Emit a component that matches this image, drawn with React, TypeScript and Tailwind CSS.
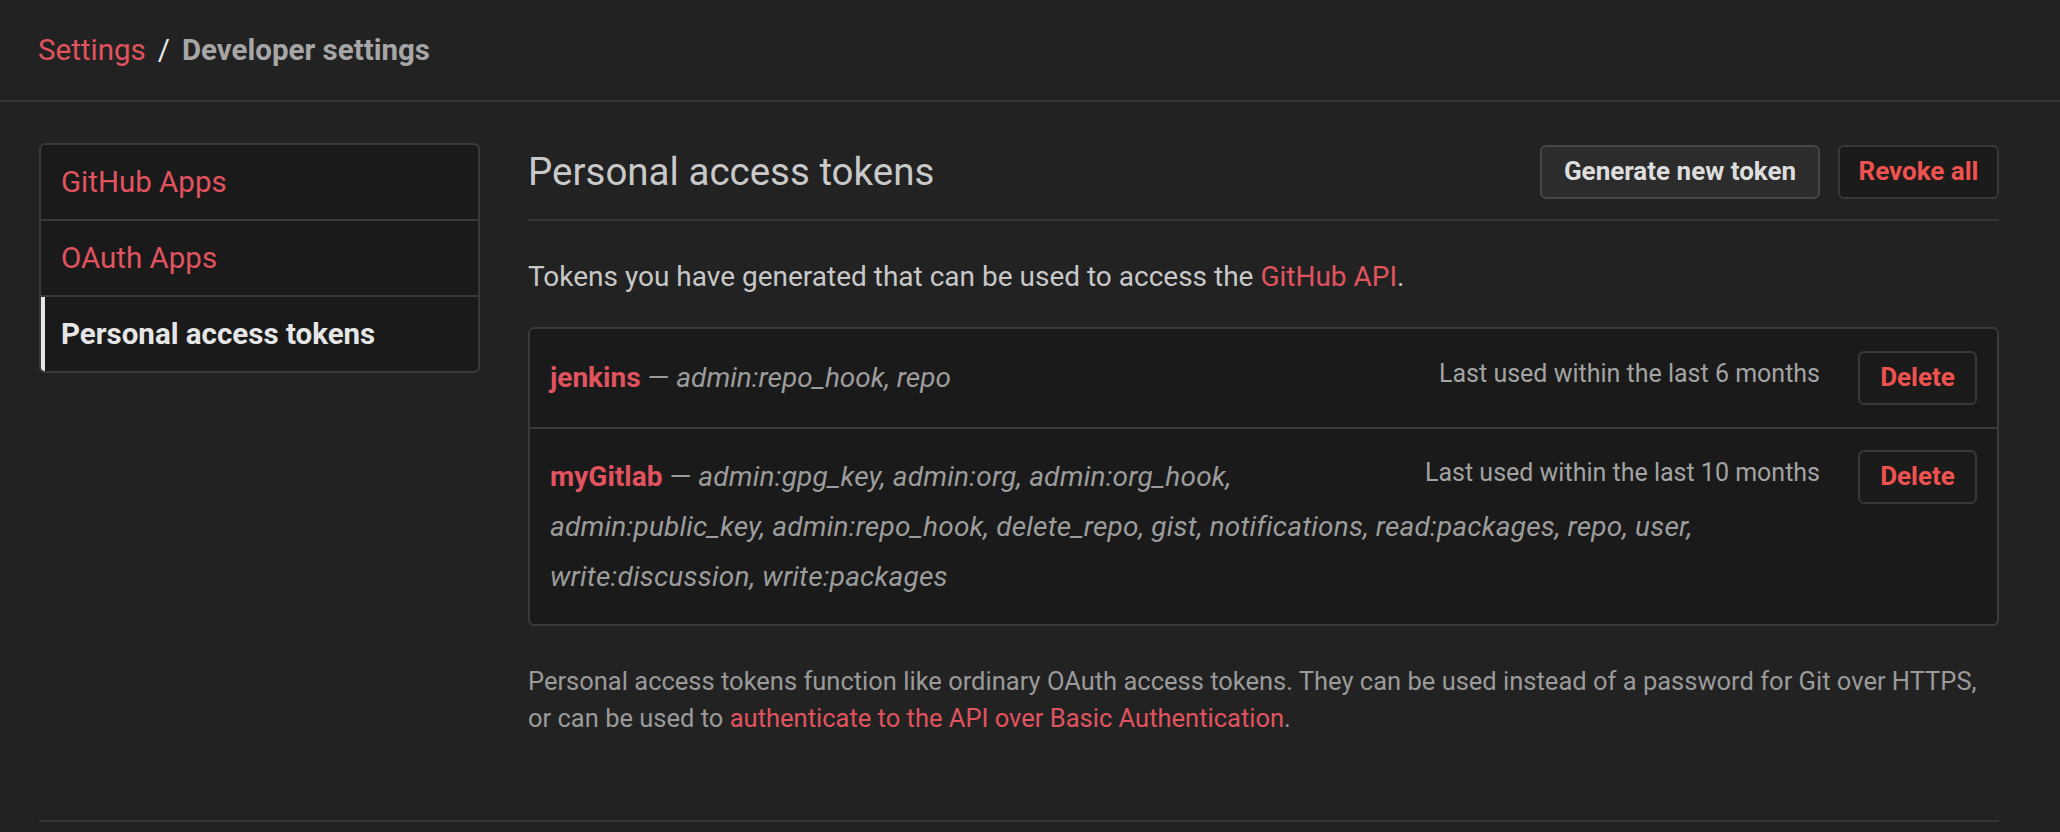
const font = { fontFamily: "Roboto, 'Noto Sans', 'Liberation Sans', sans-serif" };

function SideNav() {
  return (
    <nav className="w-[441px] shrink-0 overflow-hidden rounded-[6px] border-2 border-[#3a3a3a] bg-[#1a1a1a]">
      <a className="flex h-[74px] items-center pl-[20px] text-[29.5px] text-[#e0535f]">GitHub Apps</a>
      <a className="flex h-[76px] items-center border-t-2 border-[#3a3a3a] pl-[20px] text-[29.5px] text-[#e0535f]">
        OAuth Apps
      </a>
      <a className="relative flex h-[76px] items-center border-t-2 border-[#3a3a3a] pl-[20px] text-[29.5px] font-bold text-[#e6e6e6]">
        <span className="absolute top-0 bottom-0 left-0 w-[4px] bg-[#e6e6e6]" />
        Personal access tokens
      </a>
    </nav>
  );
}

function LastUsed({ when }: { when: string }) {
  return (
    <div className="float-right ml-[20px] flex h-[50px] items-start gap-[38px]">
      <span className="text-[25px] leading-[42px] text-[#a3a3a3]">Last used within the last {when}</span>
      <button className="-mt-[2px] h-[54px] w-[119px] rounded-[6px] border-2 border-[#383838] bg-[#1b1b1b] text-[26px] font-bold text-[#f0524f]">
        Delete
      </button>
    </div>
  );
}

function TokenList() {
  return (
    <div className="rounded-[6px] border-2 border-[#3a3a3a] bg-[#1a1a1a]">
      <div className="px-[20px] py-[24px]">
        <LastUsed when="6 months" />
        <p className="text-[28px] leading-[50px] text-[#9c9c9c]">
          <strong className="text-[#e0535f]">jenkins</strong> — <em>admin:repo_hook, repo</em>
        </p>
      </div>
      <div className="border-t-2 border-[#3a3a3a] px-[20px] pt-[23px] pb-[22px]">
        <LastUsed when="10 months" />
        <p className="text-[28px] leading-[50px] text-[#9c9c9c]">
          <strong className="text-[#e0535f]">myGitlab</strong> —{" "}
          <em className="tracking-[0.2px]">
            admin:gpg_key, admin:org, admin:org_hook,
            <br />
            admin:public_key, admin:repo_hook, delete_repo, gist, notifications, read:packages, repo, user,
            <br />
            write:discussion, write:packages
          </em>
        </p>
      </div>
    </div>
  );
}

export default function App() {
  return (
    <div className="min-h-screen bg-[#222222]" style={font}>
      <header className="h-[102px] border-b-2 border-[#343434]">
        <div className="ml-[38px] flex h-[100px] items-center text-[29.5px]">
          <a className="text-[#e0535f]">Settings</a>
          <span className="mx-[12px] text-[#e8e8e8]">/</span>
          <span className="font-bold text-[#a6a6a6]">Developer settings</span>
        </div>
      </header>

      <div className="ml-[39px] w-[1960px]">
        <div className="flex items-start gap-[48px] pt-[41px]">
          <SideNav />

          <main className="min-w-0 flex-1">
            <div className="flex items-center justify-between border-b-2 border-[#363636] pb-[18px]">
              <h2 className="text-[38.5px] text-[#c9c9c9]">Personal access tokens</h2>
              <div className="flex gap-[18px]">
                <button className="h-[54px] w-[280px] rounded-[6px] border-2 border-[#464646] bg-[#2c2c2c] text-[26px] font-bold text-[#dedede]">
                  Generate new token
                </button>
                <button className="h-[54px] w-[161px] rounded-[6px] border-2 border-[#383838] bg-[#1b1b1b] text-[26px] font-bold text-[#f0524f]">
                  Revoke all
                </button>
              </div>
            </div>

            <p className="mt-[35px] mb-[29px] text-[28px] leading-[42px] text-[#c8c8c8]">
              Tokens you have generated that can be used to access the{" "}
              <a className="text-[#e0535f]">GitHub API</a>.
            </p>

            <TokenList />

            <p className="mt-[37px] text-[25.5px] leading-[37px] text-[#9a9a9a]">
              Personal access tokens function like ordinary OAuth access tokens. They can be used instead of a
              password for Git over HTTPS,
              <br />
              or can be used to{" "}
              <a className="text-[#e0535f]">authenticate to the API over Basic Authentication</a>.
            </p>
          </main>
        </div>

        <div className="mt-[83px] border-t-2 border-[#343434]" />
      </div>
    </div>
  );
}
